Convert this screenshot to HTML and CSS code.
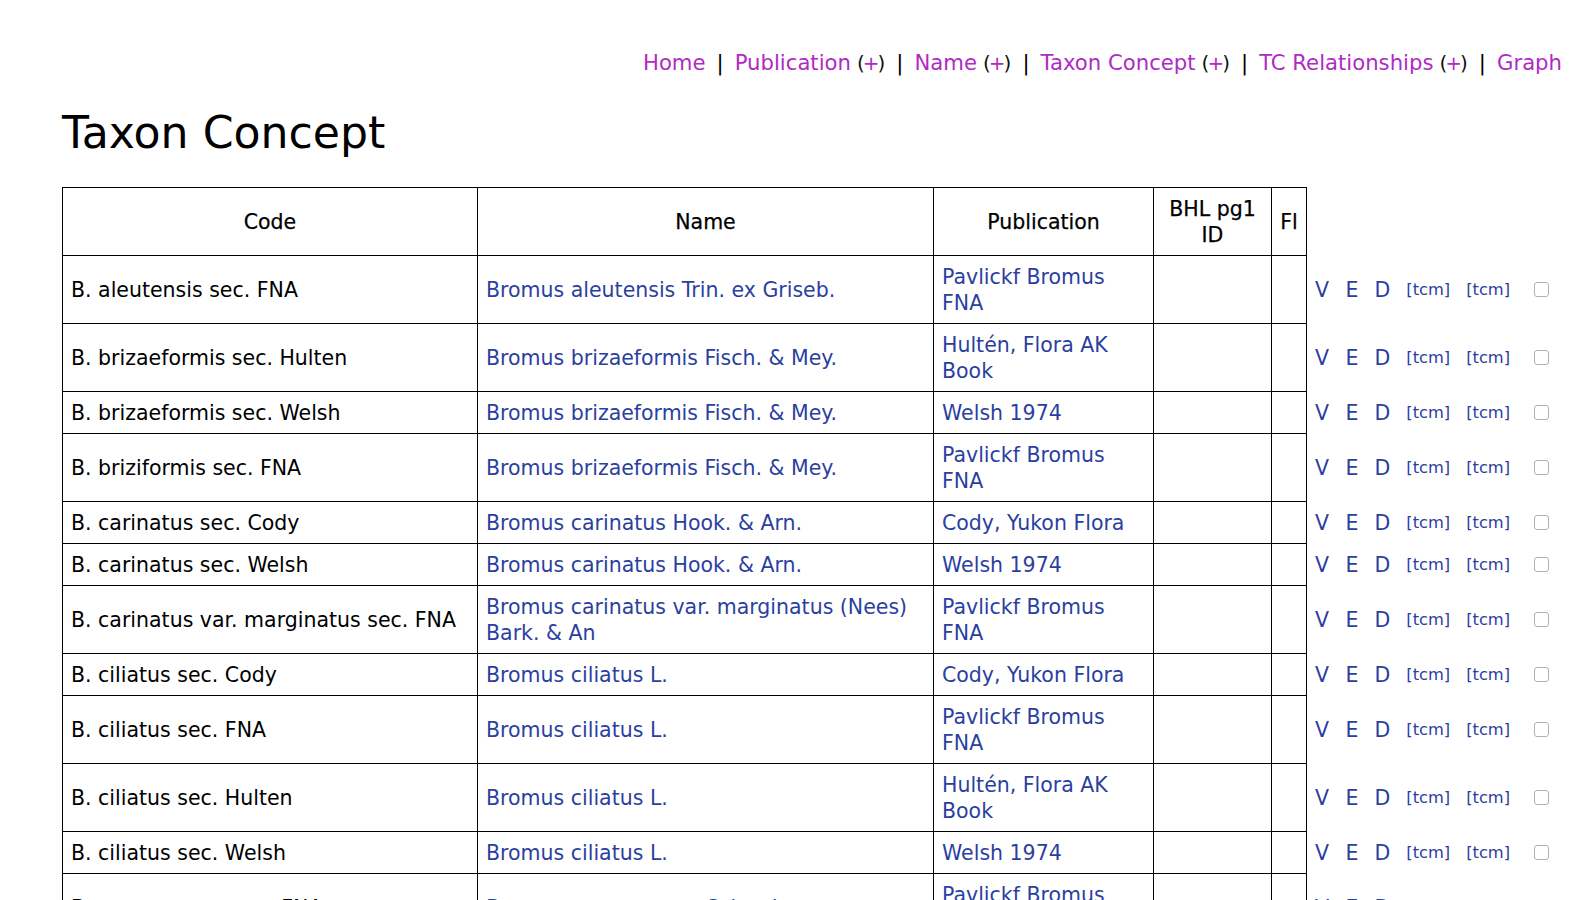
FILE: index.html
```html
<!DOCTYPE html>
<html lang="en">
<head>
<meta charset="utf-8">
<title>Taxon Concept</title>
<link rel="stylesheet" href="styles.css">
</head>
<body>
<nav class="topnav">
  <a class="nav-link" href="#">Home</a><span class="sep">|</span>
  <a class="nav-link" href="#">Publication</a><span class="plus">(<a class="nav-link" href="#">+</a>)</span><span class="sep">|</span>
  <a class="nav-link" href="#">Name</a><span class="plus">(<a class="nav-link" href="#">+</a>)</span><span class="sep">|</span>
  <a class="nav-link" href="#">Taxon Concept</a><span class="plus">(<a class="nav-link" href="#">+</a>)</span><span class="sep">|</span>
  <a class="nav-link" href="#">TC Relationships</a><span class="plus">(<a class="nav-link" href="#">+</a>)</span><span class="sep">|</span>
  <a class="nav-link" href="#">Graph</a>
</nav>
<main class="content">
<h1 class="title">Taxon Concept</h1>
<table class="tc-table">
<thead>
<tr>
<th class="c-code">Code</th>
<th class="c-name">Name</th>
<th class="c-pub">Publication</th>
<th class="c-bhl">BHL pg1 ID</th>
<th class="c-fl">Fl</th>
</tr>
</thead>
<tbody>
<tr><td class="bd">B. aleutensis sec. FNA</td><td class="bd"><a href="#">Bromus aleutensis Trin. ex Griseb.</a></td><td class="bd"><a href="#">Pavlickf Bromus FNA</a></td><td class="bd"></td><td class="bd"></td><td class="act"><a href="#">V</a></td><td class="act"><a href="#">E</a></td><td class="act"><a href="#">D</a></td><td class="act small"><a href="#">[tcm]</a></td><td class="act small"><a href="#">[tcm]</a></td><td class="act"><input type="checkbox" class="chk"></td></tr>
<tr><td class="bd">B. brizaeformis sec. Hulten</td><td class="bd"><a href="#">Bromus brizaeformis Fisch. &amp; Mey.</a></td><td class="bd"><a href="#">Hultén, Flora AK Book</a></td><td class="bd"></td><td class="bd"></td><td class="act"><a href="#">V</a></td><td class="act"><a href="#">E</a></td><td class="act"><a href="#">D</a></td><td class="act small"><a href="#">[tcm]</a></td><td class="act small"><a href="#">[tcm]</a></td><td class="act"><input type="checkbox" class="chk"></td></tr>
<tr><td class="bd">B. brizaeformis sec. Welsh</td><td class="bd"><a href="#">Bromus brizaeformis Fisch. &amp; Mey.</a></td><td class="bd"><a href="#">Welsh 1974</a></td><td class="bd"></td><td class="bd"></td><td class="act"><a href="#">V</a></td><td class="act"><a href="#">E</a></td><td class="act"><a href="#">D</a></td><td class="act small"><a href="#">[tcm]</a></td><td class="act small"><a href="#">[tcm]</a></td><td class="act"><input type="checkbox" class="chk"></td></tr>
<tr><td class="bd">B. briziformis sec. FNA</td><td class="bd"><a href="#">Bromus brizaeformis Fisch. &amp; Mey.</a></td><td class="bd"><a href="#">Pavlickf Bromus FNA</a></td><td class="bd"></td><td class="bd"></td><td class="act"><a href="#">V</a></td><td class="act"><a href="#">E</a></td><td class="act"><a href="#">D</a></td><td class="act small"><a href="#">[tcm]</a></td><td class="act small"><a href="#">[tcm]</a></td><td class="act"><input type="checkbox" class="chk"></td></tr>
<tr><td class="bd">B. carinatus sec. Cody</td><td class="bd"><a href="#">Bromus carinatus Hook. &amp; Arn.</a></td><td class="bd"><a href="#">Cody, Yukon Flora</a></td><td class="bd"></td><td class="bd"></td><td class="act"><a href="#">V</a></td><td class="act"><a href="#">E</a></td><td class="act"><a href="#">D</a></td><td class="act small"><a href="#">[tcm]</a></td><td class="act small"><a href="#">[tcm]</a></td><td class="act"><input type="checkbox" class="chk"></td></tr>
<tr><td class="bd">B. carinatus sec. Welsh</td><td class="bd"><a href="#">Bromus carinatus Hook. &amp; Arn.</a></td><td class="bd"><a href="#">Welsh 1974</a></td><td class="bd"></td><td class="bd"></td><td class="act"><a href="#">V</a></td><td class="act"><a href="#">E</a></td><td class="act"><a href="#">D</a></td><td class="act small"><a href="#">[tcm]</a></td><td class="act small"><a href="#">[tcm]</a></td><td class="act"><input type="checkbox" class="chk"></td></tr>
<tr><td class="bd">B. carinatus var. marginatus sec. FNA</td><td class="bd"><a href="#">Bromus carinatus var. marginatus (Nees) Bark. &amp; An</a></td><td class="bd"><a href="#">Pavlickf Bromus FNA</a></td><td class="bd"></td><td class="bd"></td><td class="act"><a href="#">V</a></td><td class="act"><a href="#">E</a></td><td class="act"><a href="#">D</a></td><td class="act small"><a href="#">[tcm]</a></td><td class="act small"><a href="#">[tcm]</a></td><td class="act"><input type="checkbox" class="chk"></td></tr>
<tr><td class="bd">B. ciliatus sec. Cody</td><td class="bd"><a href="#">Bromus ciliatus L.</a></td><td class="bd"><a href="#">Cody, Yukon Flora</a></td><td class="bd"></td><td class="bd"></td><td class="act"><a href="#">V</a></td><td class="act"><a href="#">E</a></td><td class="act"><a href="#">D</a></td><td class="act small"><a href="#">[tcm]</a></td><td class="act small"><a href="#">[tcm]</a></td><td class="act"><input type="checkbox" class="chk"></td></tr>
<tr><td class="bd">B. ciliatus sec. FNA</td><td class="bd"><a href="#">Bromus ciliatus L.</a></td><td class="bd"><a href="#">Pavlickf Bromus FNA</a></td><td class="bd"></td><td class="bd"></td><td class="act"><a href="#">V</a></td><td class="act"><a href="#">E</a></td><td class="act"><a href="#">D</a></td><td class="act small"><a href="#">[tcm]</a></td><td class="act small"><a href="#">[tcm]</a></td><td class="act"><input type="checkbox" class="chk"></td></tr>
<tr><td class="bd">B. ciliatus sec. Hulten</td><td class="bd"><a href="#">Bromus ciliatus L.</a></td><td class="bd"><a href="#">Hultén, Flora AK Book</a></td><td class="bd"></td><td class="bd"></td><td class="act"><a href="#">V</a></td><td class="act"><a href="#">E</a></td><td class="act"><a href="#">D</a></td><td class="act small"><a href="#">[tcm]</a></td><td class="act small"><a href="#">[tcm]</a></td><td class="act"><input type="checkbox" class="chk"></td></tr>
<tr><td class="bd">B. ciliatus sec. Welsh</td><td class="bd"><a href="#">Bromus ciliatus L.</a></td><td class="bd"><a href="#">Welsh 1974</a></td><td class="bd"></td><td class="bd"></td><td class="act"><a href="#">V</a></td><td class="act"><a href="#">E</a></td><td class="act"><a href="#">D</a></td><td class="act small"><a href="#">[tcm]</a></td><td class="act small"><a href="#">[tcm]</a></td><td class="act"><input type="checkbox" class="chk"></td></tr>
<tr><td class="bd">B. commutatus sec. FNA</td><td class="bd"><a href="#">Bromus commutatus Schrad.</a></td><td class="bd"><a href="#">Pavlickf Bromus FNA</a></td><td class="bd"></td><td class="bd"></td><td class="act"><a href="#">V</a></td><td class="act"><a href="#">E</a></td><td class="act"><a href="#">D</a></td><td class="act small"><a href="#">[tcm]</a></td><td class="act small"><a href="#">[tcm]</a></td><td class="act"><input type="checkbox" class="chk"></td></tr>
<tr><td class="bd">B. inermis sec. FNA</td><td class="bd"><a href="#">Bromus inermis Leyss.</a></td><td class="bd"><a href="#">Pavlickf Bromus FNA</a></td><td class="bd"></td><td class="bd"></td><td class="act"><a href="#">V</a></td><td class="act"><a href="#">E</a></td><td class="act"><a href="#">D</a></td><td class="act small"><a href="#">[tcm]</a></td><td class="act small"><a href="#">[tcm]</a></td><td class="act"><input type="checkbox" class="chk"></td></tr>
</tbody>
</table>
</main>
</body>
</html>
```
FILE: styles.css
```css
html, body {
  margin: 0;
  padding: 0;
  background: #ffffff;
}

body {
  font-family: "DejaVu Sans", "Liberation Sans", sans-serif;
  color: #000000;
  font-size: 20.5px;
  line-height: 26px;
}

a {
  color: #2b3fa0;
  text-decoration: none;
}

.topnav {
  display: flex;
  justify-content: flex-end;
  align-items: baseline;
  height: 26px;
  padding: 50px 31px 0 0;
  font-size: 21.2px;
  line-height: 26px;
}

.nav-link {
  color: #b02ac4;
}

.sep {
  margin: 0 11px;
  color: #000;
}

.plus {
  margin-left: 6px;
  font-size: 20px;
  line-height: 20px;
  letter-spacing: -2px;
  padding-right: 2px;
  color: #111;
}

.content {
  padding: 0 0 0 62px;
}

.title {
  margin: 31px 0 28px 0;
  font-size: 44.2px;
  line-height: 52px;
  font-weight: normal;
  color: #000;
}

.tc-table {
  border-collapse: collapse;
}

.tc-table th {
  border: 1px solid #000;
  padding: 7.5px 8px;
  font-weight: normal;
  text-align: center;
  vertical-align: middle;
  box-sizing: border-box;
  -webkit-text-stroke: 0.25px #000;
}

.c-code { width: 415px; }
.c-name { width: 456px; }
.c-pub { width: 220px; }
.c-bhl { width: 118px; }
.c-fl { width: 35px; }

.tc-table td {
  padding: 7.5px 8px;
  vertical-align: middle;
  text-align: left;
}

.tc-table td.bd {
  border: 1px solid #000;
}

.tc-table td.act {
  border: none;
  white-space: nowrap;
}

.tc-table td.small {
  font-size: 16.3px;
}

.chk {
  appearance: none;
  -webkit-appearance: none;
  display: block;
  width: 15px;
  height: 15px;
  margin: 0 0 0 8px;
  border: 1px solid #b5b0aa;
  border-radius: 3px;
  background: #fff;
  box-sizing: border-box;
}
```
